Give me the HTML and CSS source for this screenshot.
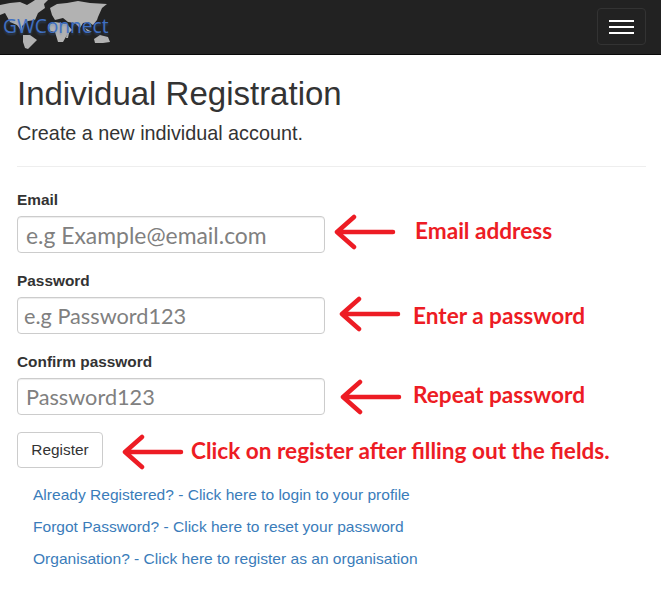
FILE: index.html
```html
<!DOCTYPE html>
<html lang="en">
<head>
<meta charset="utf-8">
<title>Individual Registration</title>
<link rel="stylesheet" href="styles.css">
</head>
<body>
<nav class="navbar">
  <a class="brand" href="#">
    <svg class="map" viewBox="0 0 110 50" width="110" height="50" aria-hidden="true">
      <path d="M0 5 L10 3 L20 2 L27 5 L32 2 L35 0 L48 0 L44 4 L45 8 L38 13 L35 20 L28 21 L22 26 L23 33 L20 29 L17 25 L10 22 L5 13 L0 15 Z"/>
      <path d="M23 35 L30 35 L37 40 L32 45 L28 49 L25 48 L23 42 Z"/>
      <path d="M50 8 L57 4 L67 3 L78 1 L90 3 L107 4 L102 8 L98 17 L97 20 L93 25 L88 22 L83 23 L80 28 L75 23 L68 22 L63 18 L55 20 L52 15 Z"/>
      <path d="M48 25 L55 22 L67 24 L72 30 L67 35 L63 42 L58 42 L55 32 L50 31 Z"/>
      <path d="M67 33 L69 33 L68 38 L66 38 Z"/>
      <path d="M94 39 L100 35 L108 37 L110 42 L103 43 L95 43 Z"/>
      <path d="M85 28 L92 32 L87 31 Z"/>
    </svg>
    <span class="brand-text">GWConnect</span>
  </a>
  <button class="toggle" type="button" aria-label="Toggle navigation">
    <span class="bar"></span><span class="bar"></span><span class="bar"></span>
  </button>
</nav>
<main class="page">
  <h2 class="title">Individual Registration</h2>
  <h4 class="subtitle">Create a new individual account.</h4>
  <hr class="rule">
  <form class="form">
    <div class="group">
      <label class="label" for="email">Email</label>
      <div class="field-row">
        <input class="input input-wide" id="email" type="text" placeholder="e.g Example@email.com">
        <span class="note note-email">
          <svg class="arrow" viewBox="0 0 66 36" width="66" height="36" aria-hidden="true"><path d="M60 18 H4 M21 3 L4 18 L21 33"/></svg>
          <span class="note-text">Email address</span>
        </span>
      </div>
    </div>
    <div class="group">
      <label class="label" for="password">Password</label>
      <div class="field-row">
        <input class="input input-tight" id="password" type="text" placeholder="e.g Password123">
        <span class="note note-password">
          <svg class="arrow" viewBox="0 0 66 36" width="66" height="36" aria-hidden="true"><path d="M60 18 H4 M21 3 L4 18 L21 33"/></svg>
          <span class="note-text">Enter a password</span>
        </span>
      </div>
    </div>
    <div class="group">
      <label class="label" for="confirm">Confirm password</label>
      <div class="field-row">
        <input class="input" id="confirm" type="text" placeholder="Password123">
        <span class="note note-repeat">
          <svg class="arrow" viewBox="0 0 66 36" width="66" height="36" aria-hidden="true"><path d="M60 18 H4 M21 3 L4 18 L21 33"/></svg>
          <span class="note-text">Repeat password</span>
        </span>
      </div>
    </div>
    <div class="field-row action">
      <button class="btn" type="button">Register</button>
      <span class="note note-register">
        <svg class="arrow" viewBox="0 0 66 36" width="66" height="36" aria-hidden="true"><path d="M60 18 H4 M21 3 L4 18 L21 33"/></svg>
        <span class="note-text">Click on register after filling out the fields.</span>
      </span>
    </div>
  </form>
  <ul class="links">
    <li><a href="#">Already Registered? - Click here to login to your profile</a></li>
    <li><a href="#">Forgot Password? - Click here to reset your password</a></li>
    <li><a href="#">Organisation? - Click here to register as an organisation</a></li>
  </ul>
</main>
</body>
</html>
```
FILE: styles.css
```css
* { box-sizing: border-box; }
html, body { margin: 0; height: 100%; }
body {
  font-family: "Liberation Sans", Arial, sans-serif;
  font-size: 15.4px;
  color: #333;
  background: #fff;
  overflow: hidden;
}
.navbar {
  height: 55px;
  background: #222;
  border-bottom: 1px solid #080808;
  display: flex;
  justify-content: space-between;
  align-items: flex-start;
  padding-right: 15px;
}
.brand {
  position: relative;
  display: block;
  width: 110px;
  height: 50px;
  text-decoration: none;
}
.map { display: block; filter: blur(0.4px); }
.map path { fill: #b2b2b2; }
.brand-text {
  position: absolute;
  left: 3px;
  top: 14px;
  font-family: "Open Sans", sans-serif;
  font-size: 19.2px;
  line-height: 24px;
  color: #3f6fc2;
  text-shadow: 0 2px 2px rgba(63,108,181,.35);
}
.toggle {
  width: 49px;
  height: 37px;
  margin-top: 8px;
  padding: 0;
  background: transparent;
  border: 1px solid #333;
  border-radius: 4px;
  display: flex;
  flex-direction: column;
  justify-content: center;
  align-items: center;
  gap: 4px;
}
.bar { display: block; width: 25px; height: 2px; background: #fff; }
.page { padding: 0 15px 0 17px; }
.title {
  margin: 19px 0 0;
  font-size: 33px;
  line-height: 39px;
  font-weight: 400;
  color: #333;
}
.subtitle {
  margin: 9px 0 0;
  font-size: 19.8px;
  line-height: 22px;
  font-weight: 400;
  color: #333;
}
.rule { margin: 22px 0 0; border: 0; border-top: 1px solid #eee; }
.form { margin-top: 24px; }
.group { height: 81px; }
.label {
  display: block;
  height: 25px;
  font-size: 15.4px;
  line-height: 17px;
  font-weight: 700;
}
.field-row { position: relative; }
.input {
  display: block;
  width: 308px;
  height: 37px;
  padding: 0 8px;
  font-family: Lato, sans-serif;
  font-size: 21.7px;
  border: 1px solid #ccc;
  border-radius: 4px;
  box-shadow: inset 0 1px 1px rgba(0,0,0,.075);
  color: #555;
}
.input-wide { font-size: 22.9px; }
.input-tight { padding-left: 6px; }
.input::placeholder { color: #808080; opacity: 1; }
.action { margin-top: -2px; }
.btn {
  display: block;
  width: 86px;
  height: 36px;
  padding: 0;
  font-family: "Liberation Sans", Arial, sans-serif;
  font-size: 15.4px;
  color: #333;
  background: #fff;
  border: 1px solid #ccc;
  border-radius: 4px;
}
.note {
  position: absolute;
  display: flex;
  align-items: center;
  height: 36px;
  color: #ed1c24;
}
.note-email { left: 316px; top: -2.5px; }
.note-password { left: 321px; top: -1px; }
.note-repeat { left: 322px; top: 1px; }
.note-register { left: 104px; top: 1.5px; }
.arrow { display: block; flex: none; }
.arrow path {
  fill: none;
  stroke: #ed1c24;
  stroke-width: 4.5;
  stroke-linecap: round;
  stroke-linejoin: round;
}
.note-text {
  position: absolute;
  white-space: nowrap;
  font-family: Lato, sans-serif;
  font-weight: 700;
  font-size: 22.6px;
  line-height: 24px;
}
.note-email .note-text { left: 82px; top: 5px; }
.note-password .note-text { left: 75px; top: 8px; }
.note-repeat .note-text { left: 74px; top: 4px; }
.note-register .note-text { left: 70px; top: 5.5px; }
.links { list-style: none; margin: 11px 0 0 16px; padding: 0; }
.links li { height: 32px; line-height: 32px; }
.links a { color: #3a7cba; text-decoration: none; font-size: 15.55px; }
```
